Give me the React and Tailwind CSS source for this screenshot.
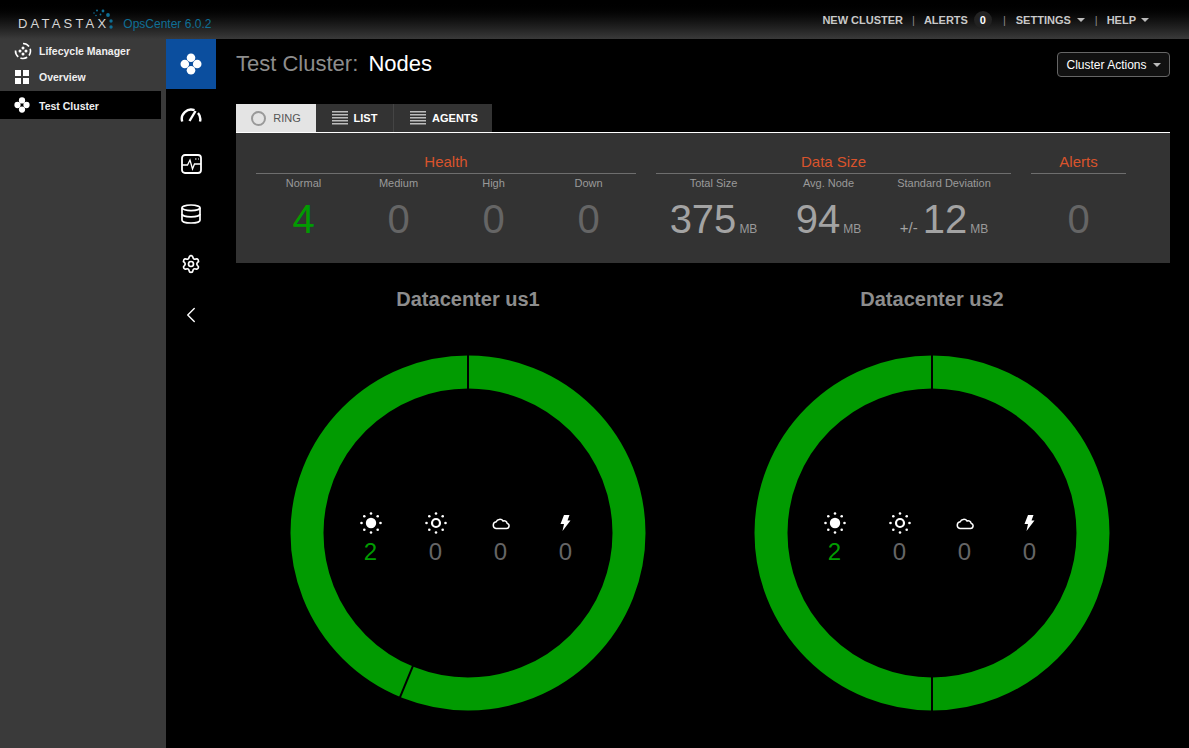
import { ChevronLeft } from "lucide-react";

const font = { fontFamily: '"Liberation Sans", Arial, sans-serif' };

function ClusterIcon({ size = 22, className = "" }) {
  return (
    <svg width={size} height={size} viewBox="0 0 22 22" className={className} fill="currentColor">
      <circle cx="11" cy="4.8" r="4.3" />
      <circle cx="4.8" cy="11" r="4.3" />
      <circle cx="17.2" cy="11" r="4.3" />
      <circle cx="11" cy="17.2" r="4.3" />
    </svg>
  );
}

function Caret({ className = "" }) {
  return <span className={`inline-block w-0 h-0 border-x-[4px] border-x-transparent border-t-[4px] ${className}`} />;
}

function LifecycleIcon() {
  return (
    <svg width="18" height="18" viewBox="0 0 18 18" fill="none" stroke="white">
      <path d="M9 1.5a7.5 7.5 0 1 1-7 4.8" strokeWidth="1.6" strokeDasharray="7 2.5" />
      <circle cx="9" cy="6" r="1.5" fill="white" stroke="none" />
      <circle cx="6" cy="9" r="1.5" fill="white" stroke="none" />
      <circle cx="12" cy="9" r="1.5" fill="white" stroke="none" />
      <circle cx="9" cy="12" r="1.5" fill="white" stroke="none" />
    </svg>
  );
}

function Logo() {
  const dots = [
    [4, 5, 0.8], [6, 7.5, 0.8], [7, 2.5, 1], [10.5, 6.5, 0.9], [13, 3, 1.4], [18, 7, 1.9], [21, 13, 1.7], [21, 19, 1.7],
  ];
  return (
    <div className="relative flex items-center h-[13px]">
      <span className="text-[13px] text-[#d6d6d6] tracking-[3.2px] leading-none">DATASTAX</span>
      <svg width="28" height="26" viewBox="0 0 28 26" className="absolute left-[72px] top-[-9px]" fill="#0f6f96">
        {dots.map(([cx, cy, r]) => (
          <circle key={cx + "-" + cy} cx={cx} cy={cy} r={r} />
        ))}
      </svg>
    </div>
  );
}

function RailIcon({ children, active }) {
  return (
    <div className={`h-[50px] flex items-center justify-center text-white ${active ? "bg-[#0b4e9e]" : ""}`}>
      {children}
    </div>
  );
}

function Lines({ color = "#bdbdbd" }) {
  return (
    <svg width="16" height="14" viewBox="0 0 16 14" fill={color}>
      <rect y="0" width="16" height="1.5" />
      <rect y="3" width="16" height="1.5" />
      <rect y="6" width="16" height="1.5" />
      <rect y="9" width="16" height="1.5" />
      <rect y="12" width="16" height="1.5" />
    </svg>
  );
}

function Stat({ label, value, green, className = "" }) {
  return (
    <div className={`flex flex-col items-center ${className}`}>
      <div className="text-[11px] leading-[13px] text-[#9a9a9a]">{label}</div>
      <div className={`text-[40px] leading-[46px] mt-[6px] ${green ? "text-[#019b01]" : "text-[#656565]"}`}>{value}</div>
    </div>
  );
}

function SizeStat({ label, value, prefix, className = "" }) {
  return (
    <div className={`flex flex-col items-center ${className}`}>
      <div className="text-[11px] leading-[13px] text-[#9a9a9a]">{label}</div>
      <div className="flex items-baseline mt-[6px] text-[#a3a3a3]">
        {prefix && <span className="text-[15px] mr-[5px]">{prefix}</span>}
        <span className="text-[40px] leading-[46px]">{value}</span>
        <span className="text-[12px] ml-[3px] text-[#9a9a9a]">MB</span>
      </div>
    </div>
  );
}

const rays = [[11, 1.5], [11, 20.5], [1.5, 11], [20.5, 11], [4.3, 4.3], [17.7, 4.3], [4.3, 17.7], [17.7, 17.7]];

function SunFull() {
  return (
    <svg width="22" height="22" viewBox="0 0 22 22" fill="white">
      <circle cx="11" cy="11" r="5.2" />
      {rays.map(([x, y]) => (
        <circle key={x + "-" + y} cx={x} cy={y} r="1.3" />
      ))}
    </svg>
  );
}

function SunRing() {
  return (
    <svg width="22" height="22" viewBox="0 0 22 22" fill="white">
      <circle cx="11" cy="11" r="4" fill="none" stroke="white" strokeWidth="2.2" />
      {rays.map(([x, y]) => (
        <circle key={x + "-" + y} cx={x} cy={y} r="1.3" />
      ))}
    </svg>
  );
}

function Cloud() {
  return (
    <svg width="18" height="14" viewBox="0 0 18 14" fill="none" stroke="white" strokeWidth="1.5">
      <path d="M4 12.5h10.5a2.7 2.7 0 0 0 .6-5.3 3 3 0 0 0-4-2.2A4 4 0 0 0 4.200 5.800 3.400 3.400 0 0 0 4 12.500z" />
    </svg>
  );
}

function Bolt() {
  return (
    <svg width="12" height="16" viewBox="0 0 12 16" fill="white" className="-ml-[2px]">
      <path d="M5 0h5.500L8.500 5.500H11.500L3.500 16l1.500-7H1.500z" />
    </svg>
  );
}

function Ring({ splitAngle }) {
  const line = (deg) => {
    const a = (deg * Math.PI) / 180;
    return { x1: 178 + 142 * Math.sin(a), y1: 178 - 142 * Math.cos(a), x2: 178 + 180 * Math.sin(a), y2: 178 - 180 * Math.cos(a) };
  };
  return (
    <svg width="356" height="356" viewBox="0 0 356 356" className="block">
      <circle cx="178" cy="178" r="161" fill="none" stroke="#019b01" strokeWidth="33" />
      <line {...line(0)} stroke="black" strokeWidth="2" />
      <line {...line(splitAngle)} stroke="black" strokeWidth="2" />
    </svg>
  );
}

function Datacenter({ name, splitAngle }) {
  const items = [
    { icon: <SunFull />, value: 2, green: true },
    { icon: <SunRing />, value: 0 },
    { icon: <Cloud />, value: 0 },
    { icon: <Bolt />, value: 0 },
  ];
  return (
    <div className="w-[464px] flex flex-col items-center">
      <h2 className="text-[20px] leading-[24px] font-bold text-[#8d8d8d] mt-[24px]">{name}</h2>
      <div className="relative mt-[44px]">
        <Ring splitAngle={splitAngle} />
        <div className="absolute left-[48px] top-[157px] w-[260px] grid grid-cols-4 justify-items-center">
          {items.map((it, i) => (
            <div key={i} className="w-[50px] flex flex-col items-center">
              <div className="h-[22px] flex items-center justify-center">{it.icon}</div>
              <div className={`text-[24px] leading-[28px] mt-[4px] ${it.green ? "text-[#019b01]" : "text-[#656565]"}`}>{it.value}</div>
            </div>
          ))}
        </div>
      </div>
    </div>
  );
}

export default function App() {
  return (
    <div className="w-[1189px] h-[748px] overflow-hidden bg-black flex flex-col" style={font}>
      <header className="h-[39px] shrink-0 bg-gradient-to-b from-black to-[#3a3a3a] flex items-center justify-between">
        <div className="flex items-center pl-[18px] pt-[8px]">
          <Logo />
          <span className="text-[12px] text-[#0f6f96] ml-[14px]">OpsCenter 6.0.2</span>
        </div>
        <nav className="flex items-center text-[11px] font-bold text-[#c9c9c9] mr-[40px] pt-[1px]">
          <span>NEW CLUSTER</span>
          <span className="ml-[9px] mr-[9px] font-normal text-[#8a8a8a]">|</span>
          <span>ALERTS</span>
          <span className="ml-[6px] w-[18px] h-[18px] rounded-full bg-[#222] text-white flex items-center justify-center">0</span>
          <span className="ml-[11px] mr-[10px] font-normal text-[#8a8a8a]">|</span>
          <span className="mt-[1px]">SETTINGS</span>
          <Caret className="ml-[6px] border-t-[#bbb]" />
          <span className="ml-[10px] mr-[9px] font-normal text-[#8a8a8a]">|</span>
          <span className="mt-[1px]">HELP</span>
          <Caret className="ml-[5px] border-t-[#bbb]" />
        </nav>
      </header>

      <div className="flex flex-1 min-h-0">
        <aside className="w-[166px] shrink-0 bg-[#3a3a3a] text-[10.5px] font-bold text-[#efefef]">
          <div className="h-[24px] flex items-center pl-[14px] gap-[7px]">
            <LifecycleIcon />
            <span className="mt-[2px]">Lifecycle Manager</span>
          </div>
          <div className="h-[28px] flex items-center pl-[15px] gap-[10px]">
            <span className="grid grid-cols-2 gap-[2px]">
              <span className="w-[6px] h-[6px] bg-white" />
              <span className="w-[6px] h-[6px] bg-white" />
              <span className="w-[6px] h-[6px] bg-white" />
              <span className="w-[6px] h-[6px] bg-white" />
            </span>
            <span className="mt-[2px]">Overview</span>
          </div>
          <div className="h-[28px] w-[161px] bg-black flex items-center pl-[14px] gap-[9px]">
            <ClusterIcon size={16} className="text-white" />
            <span className="mt-[3px]">Test Cluster</span>
          </div>
        </aside>

        <div className="w-[50px] shrink-0">
          <RailIcon active><ClusterIcon /></RailIcon>
          <RailIcon>
            <svg width="22" height="15" viewBox="0 0 22 15" fill="none" stroke="white" strokeWidth="2.4">
              <path d="M2.200 14.500A9.300 9.300 0 0 1 14.500 3.200" />
              <path d="M18 6a9.300 9.300 0 0 1 2 8.500" />
              <path d="M9.500 14 15.500 4" />
            </svg>
          </RailIcon>
          <RailIcon>
            <svg width="21" height="20" viewBox="0 0 21 20" fill="none" stroke="white" strokeWidth="1.800">
              <rect x="1" y="1" width="19" height="18" rx="3" />
              <path d="M1 11h5.500L9 6l2.500 9 2-5H20" strokeWidth="1.300" />
              <path d="M14 5h1.500M17 5h1" strokeWidth="1.200" />
            </svg>
          </RailIcon>
          <RailIcon>
            <svg width="20" height="20" viewBox="0 0 20 20" fill="none" stroke="white" strokeWidth="1.700">
              <ellipse cx="10" cy="3.800" rx="9" ry="2.800" />
              <path d="M1 3.800v12.400c0 1.600 4 2.800 9 2.800s9-1.200 9-2.800V3.800" />
              <path d="M1 10c0 1.600 4 2.800 9 2.800s9-1.200 9-2.800" />
            </svg>
          </RailIcon>
          <RailIcon>
            <svg width="20" height="20" viewBox="0 0 24 24" fill="none" stroke="white" strokeWidth="2" strokeLinecap="round" strokeLinejoin="round">
              <path d="M9.671 4.136a2.340 2.340 0 0 1 4.659 0 2.340 2.340 0 0 0 3.319 1.915 2.340 2.340 0 0 1 2.330 4.033 2.340 2.340 0 0 0 0 3.831 2.340 2.340 0 0 1-2.330 4.033 2.340 2.340 0 0 0-3.319 1.915 2.340 2.340 0 0 1-4.659 0 2.340 2.340 0 0 0-3.320-1.915 2.340 2.340 0 0 1-2.330-4.033 2.340 2.340 0 0 0 0-3.831A2.340 2.340 0 0 1 6.351 6.051a2.340 2.340 0 0 0 3.320-1.915" />
              <circle cx="12" cy="12" r="3" />
            </svg>
          </RailIcon>
          <RailIcon><ChevronLeft size={26} strokeWidth={1.300} className="text-white mt-[1px]" /></RailIcon>
        </div>

        <main className="w-[934px] ml-[20px] min-w-0">
          <div className="flex items-start justify-between h-[65px]">
            <h1 className="text-[22px] leading-[26px] mt-[12px] text-[#8d8d8d]">
              Test Cluster: <span className="ml-[4px] text-white font-medium">Nodes</span>
            </h1>
            <button className="mt-[13px] w-[113px] h-[25px] rounded-[4px] border border-[#666] bg-[#111] text-white text-[12px] flex items-center justify-center gap-[6px]">
              Cluster Actions <Caret className="border-t-[#bbb]" />
            </button>
          </div>

          <div className="flex h-[28px]">
            <div className="w-[80px] bg-[#e4e4e4] flex items-center justify-center gap-[7px] text-[11px] text-[#555]">
              <span className="w-[15px] h-[15px] rounded-full border-2 border-[#999]" />
              RING
            </div>
            <div className="w-[78px] bg-[#333] border-r border-[#444] flex items-center justify-center gap-[6px] text-[11px] font-bold text-white">
              <Lines />
              LIST
            </div>
            <div className="w-[98px] bg-[#333] pl-[2px] flex items-center justify-center gap-[6px] text-[11px] font-bold text-white">
              <Lines />
              AGENTS
            </div>
          </div>
          <div className="h-[131px] bg-[#333] border-t border-white flex pt-[20px] pl-[20px]">
            <section className="w-[380px]">
              <h3 className="text-[15px] leading-[18px] text-[#d9532c] text-center border-b border-[#6e6e6e] pb-[2px]">Health</h3>
              <div className="grid grid-cols-4 mt-[3px]">
                <Stat label="Normal" value={4} green />
                <Stat label="Medium" value={0} />
                <Stat label="High" value={0} />
                <Stat label="Down" value={0} />
              </div>
            </section>
            <section className="w-[355px] ml-[20px]">
              <h3 className="text-[15px] leading-[18px] text-[#d9532c] text-center border-b border-[#6e6e6e] pb-[2px]">Data Size</h3>
              <div className="grid grid-cols-[115px_115px_116px] mt-[3px]">
                <SizeStat label="Total Size" value="375" />
                <SizeStat label="Avg. Node" value="94" />
                <SizeStat label="Standard Deviation" value="12" prefix="+/-" />
              </div>
            </section>
            <section className="w-[95px] ml-[20px]">
              <h3 className="text-[15px] leading-[18px] text-[#d9532c] text-center border-b border-[#6e6e6e] pb-[2px]">Alerts</h3>
              <div className="mt-[3px]">
                <Stat label={"\u00a0"} value={0} />
              </div>
            </section>
          </div>

          <div className="flex">
            <Datacenter name="Datacenter us1" splitAngle={202.500} />
            <Datacenter name="Datacenter us2" splitAngle={180} />
          </div>
        </main>
      </div>
    </div>
  );
}
